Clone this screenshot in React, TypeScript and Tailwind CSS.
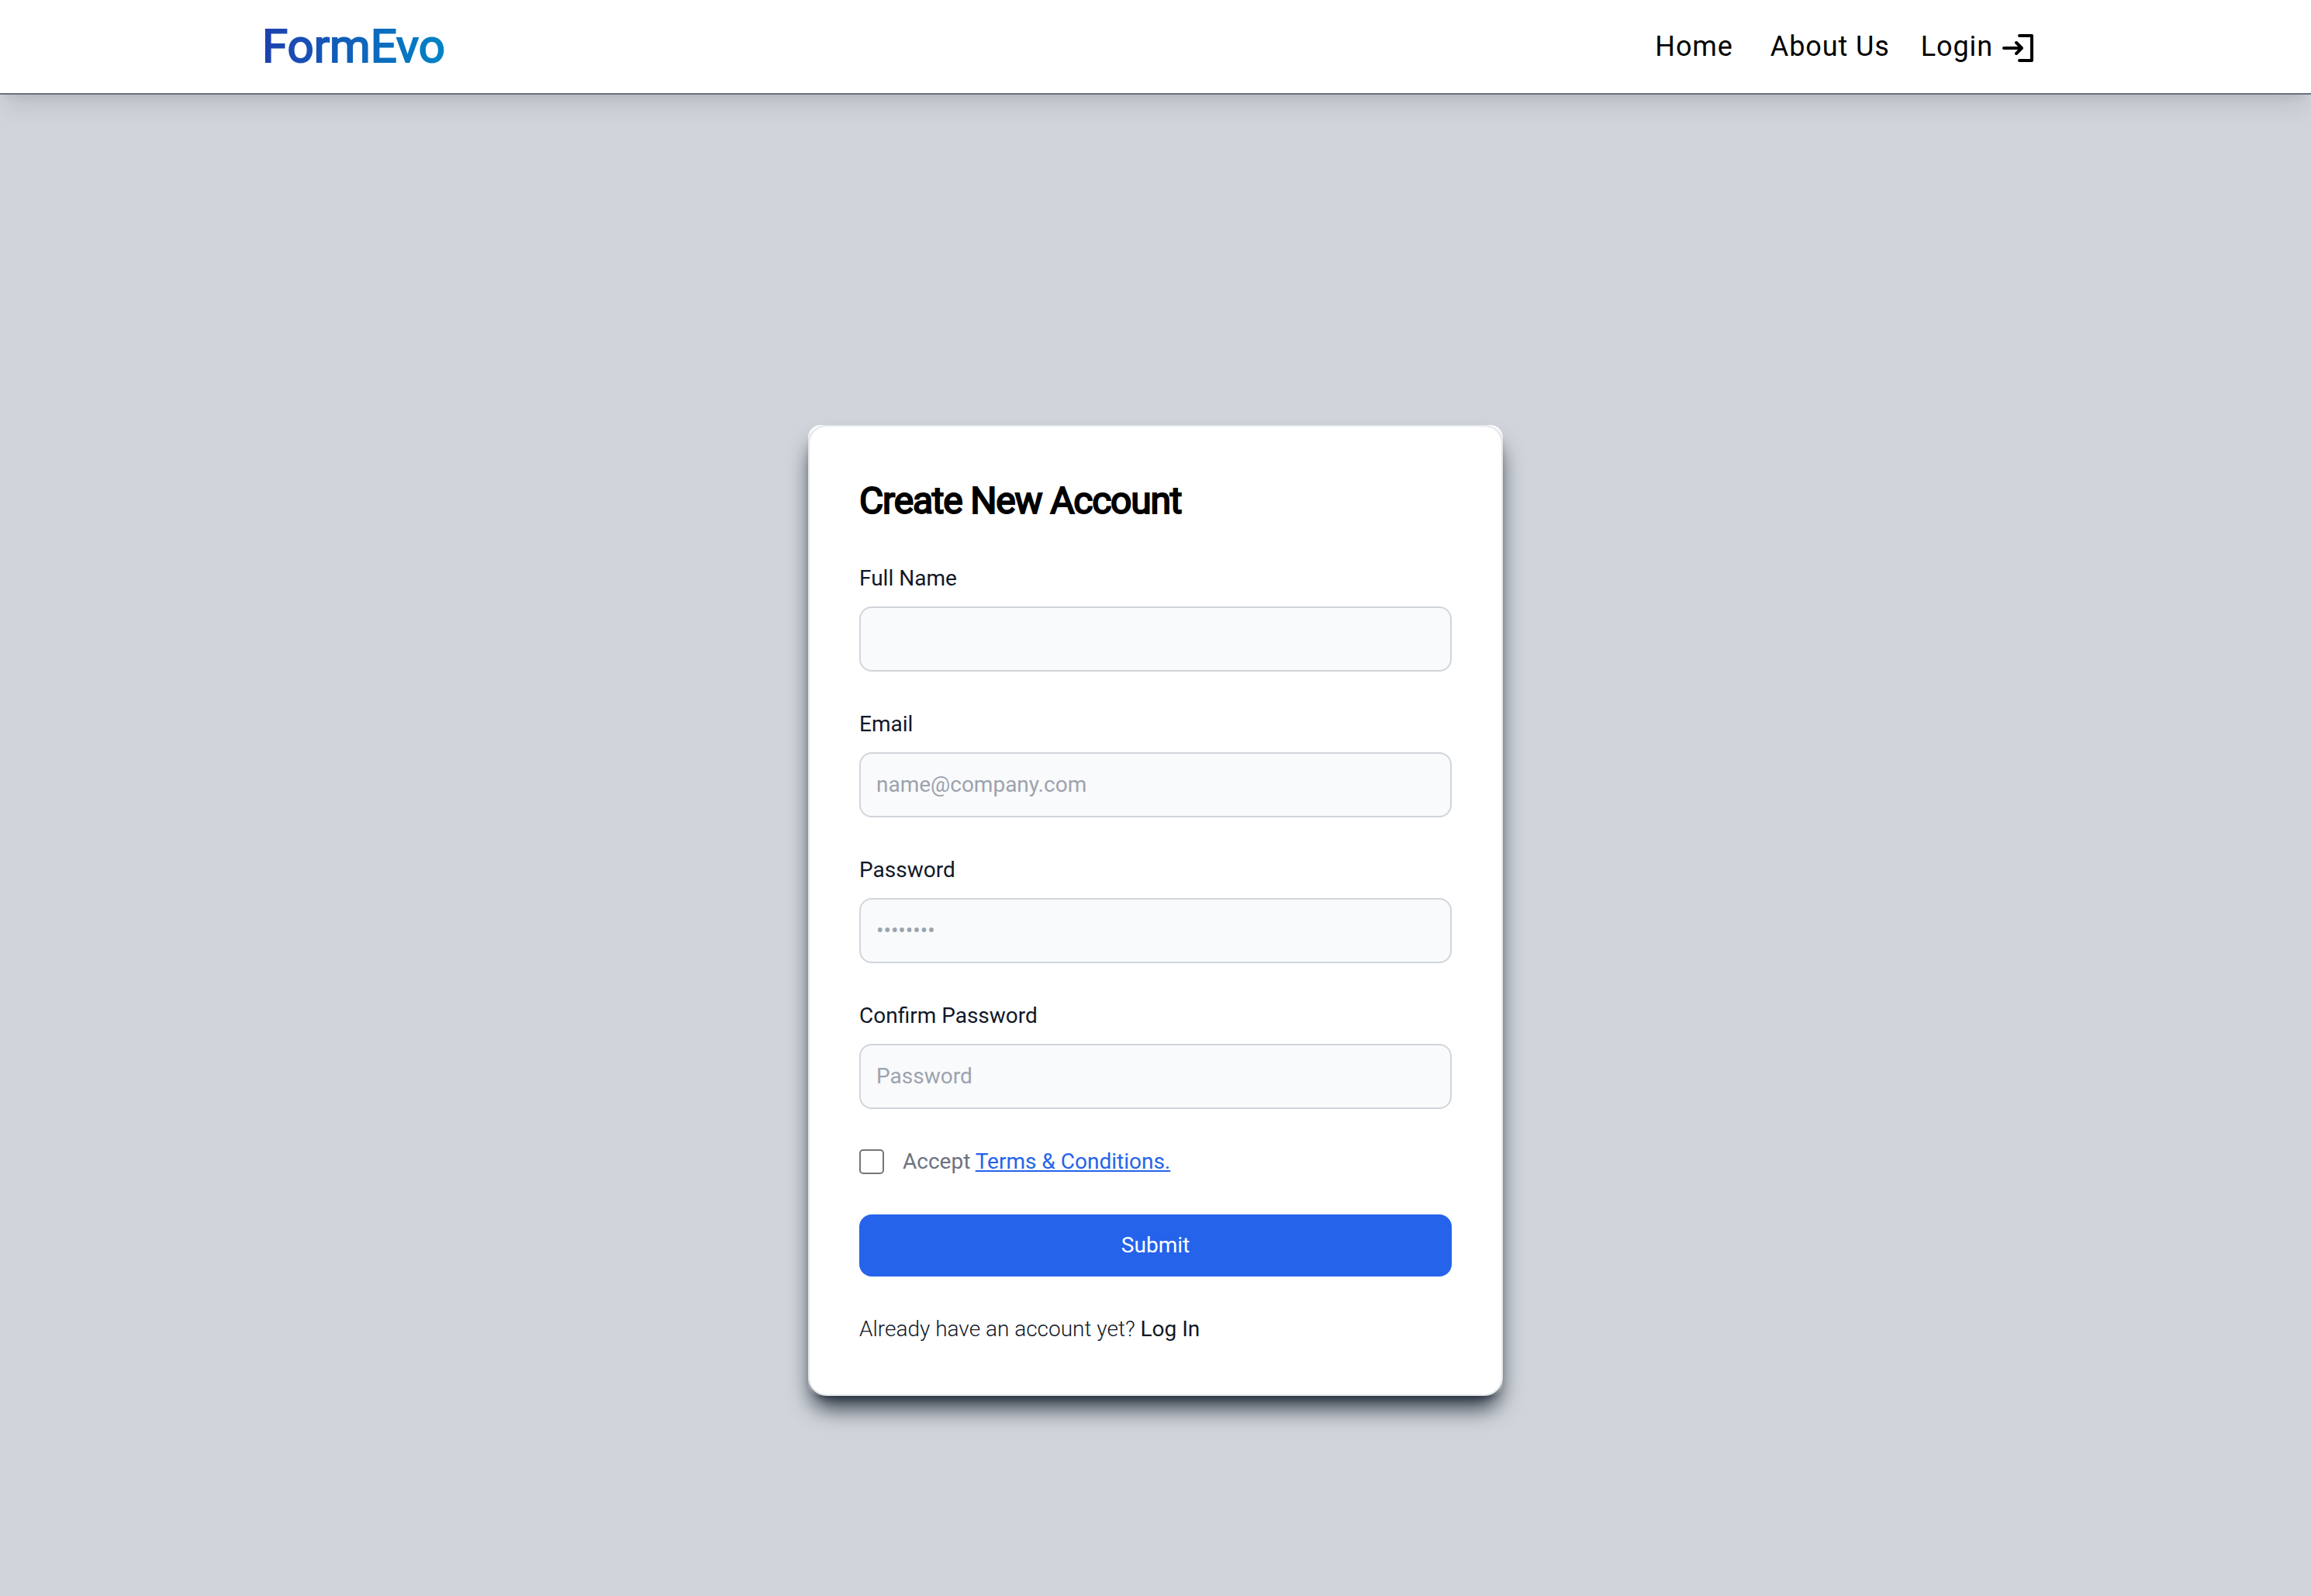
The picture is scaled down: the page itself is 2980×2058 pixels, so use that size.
import { useId } from "react";

type FieldProps = { label: string; type: string; placeholder?: string };

function Field({ label, type, placeholder }: FieldProps) {
  const id = useId();
  return (
    <div>
      <label htmlFor={id} className="mb-4 block text-[28px] leading-10 text-[#111827]">
        {label}
      </label>
      <input
        id={id}
        type={type}
        placeholder={placeholder}
        className="block w-full rounded-2xl border-2 border-[#d1d5db] bg-[#f9fafb] p-5 text-[28px] leading-10 text-[#111827] placeholder:text-[#9ca3af]"
      />
    </div>
  );
}

function LoginIcon() {
  return (
    <svg
      viewBox="0 0 40 36"
      className="mt-1 h-9 w-10"
      fill="none"
      stroke="currentColor"
      strokeWidth="4"
      strokeLinecap="round"
      strokeLinejoin="round"
      aria-hidden="true"
    >
      <path d="M22 2h16v32H22M2 18h23M18 11l7 7-7 7" />
    </svg>
  );
}

export default function App() {
  return (
    <div className="flex min-h-screen flex-col bg-[#d1d5db] font-[Roboto,sans-serif]">
      <header className="border-b-2 border-[#6b7280] bg-white shadow-[0_20px_30px_-6px_rgba(0,0,0,0.1),0_8px_12px_-8px_rgba(0,0,0,0.1)]">
        <div className="mx-auto flex h-[120px] max-w-[2304px] items-center justify-between">
          <a
            href="#"
            className="bg-[linear-gradient(to_right,#1e40af,#0284c7)] bg-clip-text text-[60px] leading-[72px] text-transparent [-webkit-text-stroke:2px_transparent]"
          >
            FormEvo
          </a>
          <nav className="flex items-center gap-10 pr-5 text-[36px] leading-[56px] tracking-wide text-black">
            <a href="#" className="mr-2">
              Home
            </a>
            <a href="#">About Us</a>
            <a href="#" className="flex items-center gap-3">
              Login
              <LoginIcon />
            </a>
          </nav>
        </div>
      </header>
      <main className="flex flex-1 flex-col items-center justify-center pt-[168px]">
        <div className="w-full max-w-[896px] rounded-2xl bg-white">
          <form
            onSubmit={(e) => e.preventDefault()}
            className="flex flex-col gap-12 rounded-3xl border-2 border-[#e5e7eb] bg-white p-16 shadow-[0_20px_30px_-6px_#1f2937,0_8px_12px_-8px_#1f2937]"
          >
            <h1 className="text-[48px] leading-[64px] font-normal tracking-tight text-black [-webkit-text-stroke:2px_black]">
              Create New Account
            </h1>
            <Field label="Full Name" type="text" />
            <Field label="Email" type="email" placeholder="name@company.com" />
            <Field label="Password" type="password" placeholder="••••••••" />
            <Field label="Confirm Password" type="password" placeholder="Password" />
            <div className="flex items-center gap-6 text-[28px] leading-10 text-[#6b7280]">
              <input
                id="terms"
                type="checkbox"
                className="size-8 appearance-none rounded-[5px] border-2 border-[#767676] bg-white checked:bg-[#2563eb]"
              />
              <label htmlFor="terms">
                Accept{" "}
                <a href="#" className="text-[#2563eb] underline">
                  Terms &amp; Conditions.
                </a>
              </label>
            </div>
            <button type="submit" className="rounded-2xl bg-[#2563eb] py-5 text-[28px] leading-10 text-white">
              Submit
            </button>
            <p className="text-[28px] leading-10 font-light text-[#111827]">
              Already have an account yet?{" "}
              <a href="#" className="font-normal">
                Log In
              </a>
            </p>
          </form>
        </div>
      </main>
    </div>
  );
}
